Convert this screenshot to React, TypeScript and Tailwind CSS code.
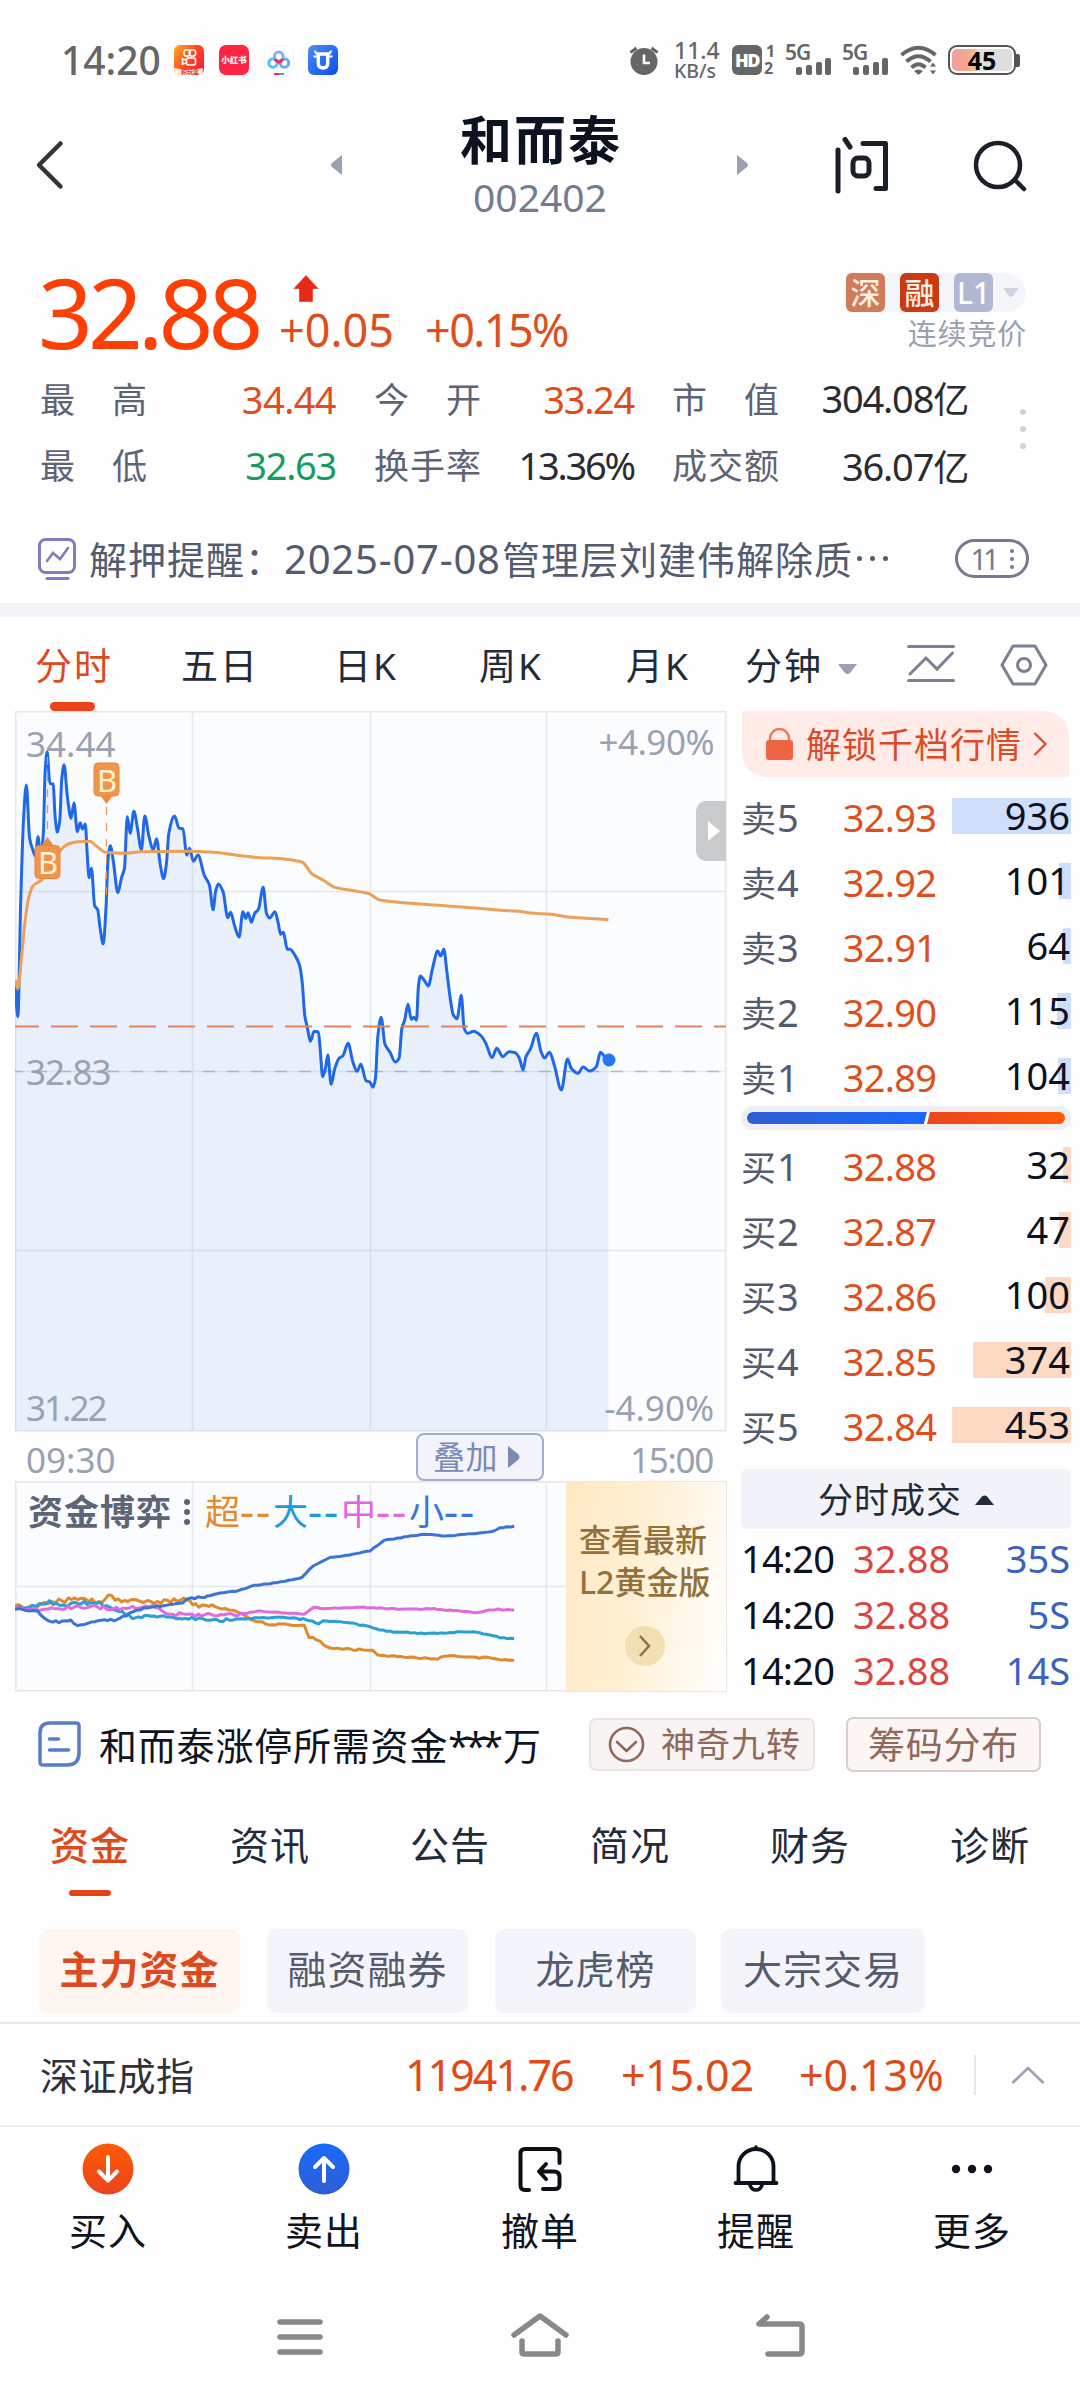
import type { ReactNode } from "react";

type Pt = [number, number];

/** Monotone cubic path through the points, so peaks keep their height. */
function smooth(p: Pt[]): string {
  const n = p.length;
  const m: number[] = [];
  const s: number[] = [];
  for (let i = 0; i < n - 1; i++) s.push((p[i + 1][1] - p[i][1]) / (p[i + 1][0] - p[i][0]));
  for (let i = 0; i < n; i++) {
    if (i === 0) m.push(s[0]);
    else if (i === n - 1) m.push(s[n - 2]);
    else if (s[i - 1] * s[i] <= 0) m.push(0);
    else m.push((2 * s[i - 1] * s[i]) / (s[i - 1] + s[i]));
  }
  let d = `M${p[0][0]},${p[0][1]}`;
  for (let i = 0; i < n - 1; i++) {
    const h = (p[i + 1][0] - p[i][0]) / 3;
    d += `C${p[i][0] + h},${p[i][1] + m[i] * h} ${p[i + 1][0] - h},${p[i + 1][1] - m[i + 1] * h} ${p[i + 1][0]},${p[i + 1][1]}`;
  }
  return d;
}

/** Adds a small deterministic ripple to a sparse series. */
function ripple(p: Pt[], amp: number, seed: number): string {
  let d = `M${p[0][0]},${p[0][1]}`;
  let k = seed;
  for (let i = 0; i < p.length - 1; i++) {
    const [x0, y0] = p[i];
    const [x1, y1] = p[i + 1];
    const steps = Math.max(1, Math.round((x1 - x0) / 7));
    for (let j = 1; j <= steps; j++) {
      k = (k * 16807) % 2147483647;
      const t = j / steps;
      const a = x0 < 420 ? amp : amp * 0.35;
      d += `L${x0 + (x1 - x0) * t},${y0 + (y1 - y0) * t + (k / 2147483647 - 0.5) * a}`;
    }
  }
  return d;
}

const price: Pt[] = [
  [32, 1080], [38, 1190], [44, 850], [50, 600], [56, 495], [63, 655], [70, 690], [75, 708], [81, 650], [86, 720],
  [92, 640], [96, 450], [100, 395], [106, 490], [113, 492], [117, 590], [122, 637], [127, 600], [131, 480], [136, 434],
  [143, 530], [151, 595], [157, 549], [164, 635], [170, 608], [175, 627], [181, 612], [185, 700], [189, 773], [194, 745],
  [201, 858], [207, 868], [213, 930], [219, 972], [225, 860], [229, 720], [234, 677], [240, 720], [250, 818], [258, 772],
  [264, 745], [270, 590], [276, 640], [284, 574], [291, 620], [300, 690], [307, 588], [316, 650], [325, 690], [332, 656],
  [340, 735], [347, 776], [353, 730], [358, 640], [370, 588], [380, 625], [388, 626], [396, 705], [402, 685], [410, 724],
  [420, 705], [433, 765], [444, 795], [452, 869], [457, 815], [463, 792], [473, 815], [483, 893], [489, 877], [497, 915],
  [507, 951], [515, 875], [521, 895], [526, 878], [533, 907], [540, 880], [548, 868], [558, 802], [565, 880], [572, 894],
  [583, 875], [590, 910], [595, 943], [601, 937], [609, 988], [614, 987], [627, 1010], [635, 1035], [641, 1090], [646, 1185],
  [652, 1225], [658, 1264], [666, 1234], [675, 1236], [679, 1290], [684, 1370], [690, 1345], [695, 1305], [702, 1393], [710, 1345],
  [719, 1315], [727, 1307], [738, 1270], [748, 1325], [757, 1354], [765, 1333], [776, 1382], [784, 1386], [791, 1402], [796, 1375],
  [801, 1250], [808, 1192], [816, 1272], [827, 1297], [838, 1326], [846, 1315], [852, 1225], [858, 1200], [865, 1153], [872, 1198],
  [877, 1192], [883, 1200], [887, 1100], [891, 1068], [899, 1080], [908, 1098], [917, 1045], [928, 993], [934, 1008], [941, 988],
  [947, 1050], [954, 1130], [961, 1185], [969, 1196], [978, 1126], [984, 1225], [991, 1240], [1004, 1234], [1020, 1248], [1030, 1270],
  [1043, 1313], [1053, 1285], [1066, 1310], [1079, 1295], [1092, 1298], [1101, 1315], [1109, 1350], [1115, 1310], [1125, 1285], [1137, 1240],
  [1147, 1295], [1154, 1314], [1165, 1297], [1175, 1335], [1190, 1410], [1203, 1317], [1211, 1345], [1225, 1360], [1236, 1341], [1250, 1353],
  [1264, 1340], [1273, 1297], [1282, 1310], [1290, 1320],
];

const average: Pt[] = [
  [32, 1080], [38, 1106], [46, 1010], [52, 920], [60, 840], [70, 798], [90, 778], [110, 725], [130, 688], [145, 672],
  [165, 665], [190, 664], [205, 679], [225, 697], [265, 700], [300, 695], [400, 694], [445, 696], [480, 701], [520, 709],
  [550, 713], [598, 716], [640, 726], [662, 762], [685, 780], [710, 802], [745, 811], [782, 821], [805, 840], [900, 853],
  [1010, 864], [1060, 871], [1100, 874], [1125, 879], [1170, 883], [1200, 890], [1290, 899],
];

const small: Pt[] = [
  [32, 630], [60, 634], [80, 638], [100, 662], [125, 668], [150, 664], [165, 678], [195, 668], [255, 659], [275, 640],
  [305, 626], [340, 618], [375, 615], [400, 598], [440, 590], [460, 582], [500, 575], [540, 558], [580, 551], [640, 534],
  [665, 498], [700, 474], [740, 467], [785, 453], [815, 422], [850, 414], [900, 404], [945, 409], [1040, 397], [1060, 385], [1090, 380],
];
const large: Pt[] = [
  [32, 628], [70, 618], [105, 608], [135, 620], [165, 610], [205, 610], [240, 626], [265, 640], [280, 652], [340, 650],
  [400, 658], [480, 662], [540, 656], [600, 654], [650, 660], [675, 672], [685, 663], [735, 668], [790, 685], [820, 696],
  [900, 702], [1010, 697], [1060, 714], [1090, 718],
];
const medium: Pt[] = [
  [32, 628], [60, 632], [90, 632], [130, 625], [200, 621], [240, 628], [330, 622], [360, 642], [400, 648], [510, 645],
  [550, 635], [645, 643], [665, 622], [680, 628], [750, 623], [870, 630], [920, 628], [1010, 640], [1050, 630], [1090, 630],
];
const huge: Pt[] = [
  [32, 620], [60, 628], [95, 608], [125, 604], [165, 600], [210, 608], [230, 592], [265, 603], [290, 598], [320, 610],
  [390, 602], [415, 618], [470, 625], [500, 635], [535, 662], [570, 674], [645, 678], [655, 712], [672, 720], [700, 748],
  [790, 752], [800, 768], [850, 772], [920, 780], [950, 770], [1030, 775], [1090, 784],
];

const asks = [
  { l: "5", p: "32.93", v: "936", w: 119 },
  { l: "4", p: "32.92", v: "101", w: 12 },
  { l: "3", p: "32.91", v: "64", w: 8 },
  { l: "2", p: "32.90", v: "115", w: 14 },
  { l: "1", p: "32.89", v: "104", w: 13 },
];
const bids = [
  { l: "1", p: "32.88", v: "32", w: 8 },
  { l: "2", p: "32.87", v: "47", w: 12 },
  { l: "3", p: "32.86", v: "100", w: 26 },
  { l: "4", p: "32.85", v: "374", w: 98 },
  { l: "5", p: "32.84", v: "453", w: 119 },
];

function Signal() {
  return (
    <div className="relative h-[30px] w-[47px]">
      <span className="absolute -top-[3px] left-0 text-[21px] leading-[20px] font-semibold tracking-[-1px]">5G</span>
      <svg className="absolute right-0 bottom-0" width="37" height="17" fill="#666">
        <rect x="1" y="9" width="6" height="8" rx="2" />
        <rect x="11" y="7" width="6" height="10" rx="2" />
        <rect x="21" y="4" width="6" height="13" rx="2" />
        <rect x="30" y="0" width="6" height="17" rx="2" />
      </svg>
    </div>
  );
}

function StatusBar() {
  return (
    <div className="flex h-[90px] items-center pt-[30px] text-[#666]">
      <span className="ml-[61px] w-[113px] text-[39px] leading-[60px] font-medium">14:20</span>
      <svg width="30" height="30" viewBox="0 0 30 30">
        <defs>
          <linearGradient id="ks" x1="0" y1="0" x2="1" y2="0.7">
            <stop offset="0" stopColor="#ffae2b" />
            <stop offset="0.55" stopColor="#ff4a1c" />
            <stop offset="1" stopColor="#f5203f" />
          </linearGradient>
        </defs>
        <rect width="30" height="30" rx="6" fill="url(#ks)" />
        <g fill="none" stroke="#fff" strokeWidth="1.6">
          <circle cx="13" cy="8" r="3.2" />
          <circle cx="18.5" cy="8" r="3.2" />
          <rect x="12.5" y="13" width="9" height="7" rx="2" />
          <path d="M12 15l-3.5-1.2v5.4L12 18" />
        </g>
        <path d="M0 23q15 3 28 0l1 1-1 6H6q-6 0-6-6z" fill="#ffe9d6" />
        <text x="7" y="29.4" fontSize="6" fontWeight="700" fill="#d5391c">积玩盒</text>
      </svg>
      <div className="ml-[15px] flex h-[30px] w-[30px] items-center justify-center rounded-[7px] bg-[#ff2442] text-[8.5px] font-black whitespace-nowrap text-white">
        小红书
      </div>
      <svg className="ml-[15px]" width="30" height="30" viewBox="0 0 30 30">
        <rect x="0.5" y="0.5" width="29" height="29" rx="6" fill="#fff" stroke="#f4f4f6" />
        <g fill="none" strokeWidth="3">
          <circle cx="9" cy="18" r="4.2" stroke="#4cc6f0" />
          <circle cx="20.5" cy="18" r="4.2" stroke="#6aa9ec" />
          <circle cx="14.8" cy="11.5" r="4.4" stroke="#7fb5ee" />
          <path d="M10.6 14q4.2 6 8.4 0" stroke="#e0306e" />
        </g>
        <path d="M10 29h5" stroke="#e0306e" strokeWidth="2" />
        <path d="M15 29h5" stroke="#3f9be0" strokeWidth="2" />
      </svg>
      <svg className="ml-[14px]" width="30" height="30" viewBox="0 0 30 30">
        <defs>
          <linearGradient id="bull" x1="0" y1="0" x2="1" y2="1">
            <stop offset="0" stopColor="#4b8cf5" />
            <stop offset="1" stopColor="#0a50ea" />
          </linearGradient>
        </defs>
        <rect width="30" height="30" rx="6" fill="url(#bull)" />
        <path d="M7.200 5.500q0 3.500 3.500 3.500h8.600q3.500 0 3.500-3.500" fill="none" stroke="#fff" strokeWidth="2" />
        <path d="M5.500 11.500h4M20.500 11.500h4" stroke="#fff" strokeWidth="2" />
        <path d="M10.300 9v9q0 5 4.700 5t4.700-5V9z" fill="none" stroke="#fff" strokeWidth="3.400" />
      </svg>
      <svg className="ml-[291px]" width="30" height="30" viewBox="0 0 30 30">
        <circle cx="15" cy="16.500" r="13.500" fill="#666" />
        <path d="M1.500 7.500l6-4.500M28.500 7.500l-6-4.500" stroke="#666" strokeWidth="3" />
        <path d="M15 9.500v8.500h6" fill="none" stroke="#fff" strokeWidth="2.600" />
      </svg>
      <div className="ml-[15px] w-[58px] font-medium">
        <div className="text-[23px] leading-[21px]">11.4</div>
        <div className="text-[19.500px] leading-[19px]">KB/s</div>
      </div>
      <div className="flex h-[30px] w-[30px] items-center justify-center rounded-[6px] bg-[#666] text-[18px] leading-none font-black tracking-[-1.500px] text-white">
        HD
      </div>
      <div className="ml-[2px] w-[21px] text-[16px] leading-[17px] font-bold">
        <div className="ml-[2px]">1</div>
        <div>2</div>
      </div>
      <Signal />
      <div className="w-[10px]" />
      <Signal />
      <svg className="ml-[11px]" width="38" height="30" viewBox="0 0 38 30">
        <g fill="none" stroke="#666" strokeWidth="4">
          <path d="M1.500 10q17-14.500 34 0" />
          <path d="M6.500 16.500q12-10.500 24 0" />
          <path d="M11.500 22.500q7-6.500 14 0" />
        </g>
        <path d="M14 26q4.500-3 9 0l-4.500 4z" fill="#666" />
        <path d="M29 22l4-5 4 5zM29 25h8l-4 5z" fill="#666" stroke="#fefefe" strokeWidth="1" />
      </svg>
      <div className="ml-[10px] flex h-[30px] w-[68px] rounded-[9px] border-2 border-[#555] p-[2px]">
        <div className="flex flex-1 items-center justify-center rounded-[5px] bg-[linear-gradient(90deg,#f59c9f_0%,#f3a78f_25%,#f0c98e_42%,#dedede_43%)] text-[25px] leading-none font-bold text-black">
          45
        </div>
      </div>
      <div className="h-[13px] w-[4px] rounded-r-[2px] bg-[#555]" />
    </div>
  );
}

function Header() {
  return (
    <div className="flex h-[150px] items-center">
      <svg className="ml-[34px]" width="32" height="52" viewBox="0 0 32 52" fill="none" stroke="#333" strokeWidth="4.500" strokeLinecap="round" strokeLinejoin="round">
        <path d="M26.500 4.500L5 26l21.500 21.500" />
      </svg>
      <svg className="ml-[265px]" width="11" height="20">
        <path d="M11 0v20L1 12q-2-2 0-4z" fill="#9ba1b3" />
      </svg>
      <div className="ml-[88px] w-[220px] text-center">
        <h1 className="mt-[8px] pl-[2px] text-[52px] leading-[56px] font-bold tracking-[2px] text-[#0c121f]">和而泰</h1>
        <div className="text-[39px] leading-[58px] text-[#747b8e]">002402</div>
      </div>
      <svg className="ml-[87px]" width="11" height="20">
        <path d="M0 0v20l10-8q2-2 0-4z" fill="#9ba1b3" />
      </svg>
      <svg className="ml-[85px]" width="60" height="60" viewBox="0 0 60 60" fill="none" stroke="#1b1f27" strokeWidth="5" strokeLinecap="round" strokeLinejoin="round">
        <path d="M5 15v41M12 4.500l5 7.500M30 8.500h22.500V53.500H43" />
        <rect x="20" y="23" width="16" height="18" rx="5" />
      </svg>
      <svg className="ml-[77px]" width="60" height="60" viewBox="0 0 60 60" fill="none" stroke="#1b1f27" strokeWidth="4.500" strokeLinecap="round">
        <circle cx="28" cy="30" r="22" />
        <path d="M45 45l9 9" />
      </svg>
    </div>
  );
}

function Badge({ cls, children }: { cls: string; children: ReactNode }) {
  return (
    <span className={"flex h-[39px] w-[39px] items-center justify-center rounded-[6px] text-[30px] leading-none font-medium text-[#fff1e6] " + cls}>
      {children}
    </span>
  );
}

function Quote() {
  return (
    <div className="relative h-[260px]">
      <div className="flex h-[126px]">
        <div className="ml-[38px] mt-[17px] w-[243px] text-[96px] leading-[110px] tracking-[-5px] text-[#fd3f04]">32.88</div>
        <div className="w-[300px] pt-[34px]">
          <svg className="ml-[11px]" width="28" height="30" viewBox="0 0 28 30">
            <path d="M14 1l13 14h-6v13H7V15H1z" fill="#e62a17" stroke="#fbe3df" strokeWidth="0.500" />
          </svg>
          <div className="mt-[3px] ml-[-2px] flex text-[45px] leading-[46px] text-[#de4f20]">
            <span className="w-[146px]">+0.05</span>
            <span className="tracking-[-1.600px]">+0.15%</span>
          </div>
        </div>
        <div className="ml-auto mr-[54px] mt-[33px] flex flex-col items-end">
          <div className="flex h-[39px] w-[180px] items-center gap-[15px] rounded-r-full bg-[#f5f6fa]">
            <Badge cls="bg-[#d27b5a]">深</Badge>
            <Badge cls="bg-[#cb3a13]">融</Badge>
            <Badge cls="bg-[#b0b8d3] text-white">L1</Badge>
            <svg className="-ml-[5px]" width="16" height="10">
              <path d="M0 0h16l-6 8q-2 2-4 0z" fill="#cdd2dc" />
            </svg>
          </div>
          <span className="-mr-[1px] mt-[5px] text-[29px] leading-[34px] tracking-[0.800px] text-[#9aa0b0]">连续竞价</span>
        </div>
      </div>
      <div className="flex text-[38px] leading-[66px] whitespace-nowrap text-[#2b2c30]">
        <div className="ml-[40px] w-[108px] pt-[1px] text-[35px] tracking-[1px] text-[#5d6476]">
          <div>最<span className="inline-block w-[36px]" />高</div>
          <div>最<span className="inline-block w-[36px]" />低</div>
        </div>
        <div className="w-[188px] text-right">
          <div className="tracking-[-0.600px] text-[#de4f20]">34.44</div>
          <div className="tracking-[-1.300px] text-[#159d61]">32.63</div>
        </div>
        <div className="ml-[38px] w-[108px] pt-[1px] text-[35px] tracking-[1px] text-[#5d6476]">
          <div>今<span className="inline-block w-[36px]" />开</div>
          <div>换手率</div>
        </div>
        <div className="w-[152px] text-right">
          <div className="tracking-[-1.300px] text-[#e04c17]">33.24</div>
          <div className="tracking-[-2.200px]">13.36%</div>
        </div>
        <div className="ml-[38px] w-[108px] pt-[1px] text-[35px] tracking-[1px] text-[#5d6476]">
          <div>市<span className="inline-block w-[36px]" />值</div>
          <div>成交额</div>
        </div>
        <div className="mt-[-1px] w-[188px] text-right tracking-[-1.200px]">
          <div>304.08<span className="text-[36px]">亿</span></div>
          <div>36.07<span className="text-[36px]">亿</span></div>
        </div>
        <div className="ml-[52px] mt-[43px] flex flex-col gap-[11px]">
          <i className="block h-[6px] w-[6px] rounded-full bg-[#cdd2dc]" />
          <i className="block h-[6px] w-[6px] rounded-full bg-[#cdd2dc]" />
          <i className="block h-[6px] w-[6px] rounded-full bg-[#cdd2dc]" />
        </div>
      </div>
    </div>
  );
}

function Notice() {
  return (
    <div className="flex h-[103px] items-center pt-[14px]">
      <svg className="ml-[37px]" width="40" height="44" viewBox="0 0 40 44" fill="none" stroke="#8678c4" strokeWidth="3" strokeLinecap="round">
        <rect x="2.500" y="2.500" width="35" height="33" rx="6" />
        <path d="M10 24l6-8 7 6 8-11" strokeWidth="2.600" />
        <path d="M10 41.500h21" />
      </svg>
      <div className="ml-[12px] flex w-[866px] items-center text-[38px] leading-[60px] tracking-[1px] whitespace-nowrap text-[#545b6e]">
        <span className="w-[195px]">解押提醒：</span>
        <span className="w-[218px] text-[40px] tracking-[0.800px]">2025-07-08</span>
        <span>管理层刘建伟解除质</span>
        <span className="flex gap-[8px] pl-[4px]">
          <i className="block h-[5px] w-[5px] rounded-full bg-[#545b6e]" />
          <i className="block h-[5px] w-[5px] rounded-full bg-[#545b6e]" />
          <i className="block h-[5px] w-[5px] rounded-full bg-[#545b6e]" />
        </span>
      </div>
      <div className="flex h-[39px] w-[74px] items-center justify-center gap-[14px] rounded-full border-[3px] border-[#747b8e] text-[29px] leading-none tracking-[-4px] text-[#747b8e]">
        11
        <span className="flex flex-col gap-[4px]">
          <i className="block h-[4px] w-[4px] rounded-full bg-[#747b8e]" />
          <i className="block h-[4px] w-[4px] rounded-full bg-[#747b8e]" />
          <i className="block h-[4px] w-[4px] rounded-full bg-[#747b8e]" />
        </span>
      </div>
    </div>
  );
}

function PeriodTabs() {
  return (
    <div className="flex h-[94px] items-center pt-[4px] text-[37px] leading-[60px] tracking-[2px] whitespace-nowrap text-[#232b3b]">
      <div className="relative ml-[35px] w-[146px] text-[#dd4a20]">
        分时
        <span className="absolute top-[66px] left-[15px] h-[9px] w-[45px] rounded-full bg-[#ec441a]" />
      </div>
      <div className="w-[153px]">五日</div>
      <div className="w-[145px]">日K</div>
      <div className="w-[147px]">周K</div>
      <div className="w-[119px]">月K</div>
      <div className="w-[93px]">分钟</div>
      <svg className="mt-[6px]" width="19" height="11">
        <path d="M0 0h19l-7 9q-2.500 2-5 0z" fill="#9ba1b3" />
      </svg>
      <svg className="ml-[49px] -mt-[4px]" width="50" height="40" viewBox="0 0 50 40" fill="none" stroke="#7b8193" strokeWidth="3" strokeLinecap="round">
        <path d="M2.500 2.500h45M2.500 36.500h45M4 30l16-16 11 11L46.500 9" />
      </svg>
      <svg className="ml-[44px] -mt-[3px]" width="48" height="44" viewBox="0 0 48 44" fill="none" stroke="#7b8193" strokeWidth="3" strokeLinejoin="round">
        <path d="M13 3h22l11 19-11 19H13L2 22z" />
        <circle cx="24" cy="22" r="6.500" />
      </svg>
    </div>
  );
}

function PriceChart() {
  const line = smooth(price);
  return (
    <div className="relative h-[721px] w-[712px] text-[35px] leading-[40px] text-[#9aa1b2]">
      <svg className="block" width="712" height="721" viewBox="0 0 712 721">
        <rect x="0.750" y="0.750" width="710" height="719" fill="#fbfcfe" stroke="#e4e6ea" strokeWidth="1.500" />
        <path d="M177.500 0v720M355.500 0v720M531.500 0v720M0 180.500h711M0 360.500h711M0 539.500h711" stroke="#e6e8ec" strokeWidth="1.500" />
        <path d="M0 360.500h711" stroke="#b3bac8" strokeWidth="1.500" strokeDasharray="12 12" strokeDashoffset="4" />
        <svg x="0" y="0" width="711" height="720" viewBox="32 273 1507 2160" preserveAspectRatio="none" fill="none" overflow="visible">
          <path d={line + "L1290,2433L32,2433Z"} fill="#2f78e8" fillOpacity="0.085" />
          <path d={line} stroke="#1f68e6" strokeWidth="3" strokeLinejoin="round" vectorEffect="non-scaling-stroke" />
          <path d={smooth(average)} stroke="#eda057" strokeWidth="3" strokeLinejoin="round" vectorEffect="non-scaling-stroke" />
        </svg>
        <path d="M0 315.500h711" stroke="#e0835f" strokeWidth="2" strokeDasharray="27 12" strokeDashoffset="3" />
        <path d="M32.500 46v78M91.500 96v90" stroke="#e0935f" strokeWidth="1.200" strokeDasharray="8 8" />
        <circle cx="594" cy="349" r="6.500" fill="#2a77f6" />
        <path d="M26 135l6.500-9 6.500 9z" fill="#ec8b45" />
        <rect x="20" y="134.500" width="25" height="33" rx="4" fill="#f0964b" stroke="#ea8438" />
        <path d="M85 84h13l-6.500 9z" fill="#ec8b45" />
        <rect x="79" y="52" width="25" height="33" rx="4" fill="#f0964b" stroke="#ea8438" />
      </svg>
      <span className="absolute top-[134px] left-[20px] w-[26px] text-center text-[31px] leading-[34px] text-[#fff2d8]">B</span>
      <span className="absolute top-[52px] left-[79px] w-[26px] text-center text-[31px] leading-[34px] text-[#fff2d8]">B</span>
      <span className="absolute top-[13px] left-[11px]">34.44</span>
      <span className="absolute top-[11px] right-[13px] tracking-[-0.500px]">+4.90%</span>
      <span className="absolute top-[341px] left-[11px] tracking-[-1px]">32.83</span>
      <span className="absolute top-[677px] left-[11px] tracking-[-2px]">31.22</span>
      <span className="absolute top-[677px] right-[13px]">-4.90%</span>
      <div className="absolute top-[90px] right-[1px] flex h-[60px] w-[30px] items-center rounded-l-[10px] bg-[#c9cbcd] pl-[12px]">
        <svg width="12" height="20">
          <path d="M0 0l12 10L0 20z" fill="#fff" />
        </svg>
      </div>
    </div>
  );
}

function Legend({ cls, children }: { cls: string; children: ReactNode }) {
  return (
    <span className={"flex w-[68px] items-center " + cls}>
      {children}
      <b className="inline-block origin-left scale-x-[1.250] font-medium tracking-[1.500px]">--</b>
    </span>
  );
}

function FlowChart() {
  const paths: [string, string][] = [
    [ripple(huge, 14, 17), "#e08a2b"],
    [ripple(large, 10, 91), "#2a9fd3"],
    [ripple(medium, 10, 55), "#e06ae0"],
    [ripple(small, 7, 23), "#3b74d6"],
  ];
  return (
    <div className="relative flex h-[211px] w-[712px]">
      <svg className="block" width="712" height="211" viewBox="0 0 712 211">
        <rect x="0.750" y="0.750" width="710" height="209" fill="#fbfcfe" stroke="#e4e6ea" strokeWidth="1.500" />
        <path d="M177.500 0v210M355.500 0v210M531.500 0v210M0 105.500h711" stroke="#e6e8ec" strokeWidth="1.500" />
        <svg x="0" y="0" width="711" height="210" viewBox="32 244 1507 631" preserveAspectRatio="none" fill="none">
          {paths.map(([d, c]) => (
            <path key={c} d={d} stroke={c} strokeWidth="3" strokeLinejoin="round" vectorEffect="non-scaling-stroke" />
          ))}
        </svg>
      </svg>
      <div className="absolute top-[9px] left-[13px] flex items-center text-[35px] leading-[44px]">
        <span className="w-[156px] font-bold tracking-[1px] text-[#5d6476]">资金博弈</span>
        <span className="mr-[15px] flex flex-col gap-[4px]">
          <i className="block h-[6px] w-[6px] rounded-full bg-[#5d6476]" />
          <i className="block h-[6px] w-[6px] rounded-full bg-[#5d6476]" />
          <i className="block h-[6px] w-[6px] rounded-full bg-[#5d6476]" />
        </span>
        <Legend cls="text-[#e6892a]">超</Legend>
        <Legend cls="text-[#1d9bd8]">大</Legend>
        <Legend cls="text-[#e462e4]">中</Legend>
        <Legend cls="text-[#3b74d6]">小</Legend>
      </div>
      <div className="absolute top-0 right-0 h-[211px] w-[161px] border-y border-r border-[#e9e6dc] bg-[linear-gradient(100deg,#ffe9c4_0%,#fff0d4_45%,#fffaf0_80%,#fff_100%)] pt-[37px] pl-[13px] text-[32px] leading-[42px] font-medium whitespace-nowrap text-[#94703a]">
        <div>查看最新</div>
        <div>L2黄金版</div>
        <div className="mt-[23px] ml-[46px] flex h-[40px] w-[40px] items-center justify-center rounded-full bg-[#f3dfb4]">
          <svg width="14" height="24" viewBox="0 0 14 24" fill="none" stroke="#94703a" strokeWidth="2.500">
            <path d="M2 2l9 10-9 10" />
          </svg>
        </div>
      </div>
    </div>
  );
}

function BookRow({ side, l, p, v, w, fill }: { side: string; l: string; p: string; v: string; w: number; fill: string }) {
  return (
    <div className="flex h-[65px] items-start">
      <div className="flex w-[88px] items-baseline pt-px text-[38px] leading-[36px] text-[#545b6e]">
        <span className="mr-[1px] text-[35px]">{side}</span>
        {l}
      </div>
      <div className="w-[121px] pt-px text-center text-[38px] leading-[36px] tracking-[-0.700px] text-[#de4f20]">{p}</div>
      <div className="relative flex h-[36px] flex-1 justify-end">
        <div className={"h-[36px] " + fill} style={{ width: w }} />
        <span className="absolute top-[-1px] right-[1px] text-[38px] leading-[36px] text-[#0c121f]">{v}</span>
      </div>
    </div>
  );
}

function OrderBook() {
  return (
    <div className="ml-[14px] w-[330px]">
      <div className="ml-[1px] flex h-[66px] w-[327px] items-center rounded-tr-[25px] rounded-bl-[25px] bg-[#ffebe8] text-[35px] leading-[60px] tracking-[1px] text-[#dd4a26]">
        <svg className="ml-[24px] mr-[13px]" width="27" height="32" viewBox="0 0 27 32">
          <path d="M4 13V10.500a9.500 9.500 0 0 1 19 0V13" fill="none" stroke="#ee7a5e" strokeWidth="2.500" />
          <rect x="0" y="12" width="27" height="20" rx="3" fill="#f16443" />
        </svg>
        <span className="pt-[2px]">解锁千档行情</span>
        <svg className="ml-[11px]" width="14" height="24" viewBox="0 0 14 24" fill="none" stroke="#dd4a26" strokeWidth="2.200">
          <path d="M1.500 1l11 11-11 11" />
        </svg>
      </div>
      <div className="mt-[21px] h-[306px]">
        {asks.map((r) => (
          <BookRow key={r.l} side="卖" {...r} fill="bg-[#cfdefb]" />
        ))}
      </div>
      <div className="mt-[2px] flex h-[24px] items-center rounded-full bg-[#efeff1] px-[6px]">
        <svg width="318" height="12" viewBox="0 0 318 12">
          <defs>
            <linearGradient id="sell">
              <stop offset="0" stopColor="#305ed4" />
              <stop offset="1" stopColor="#1a69fb" />
            </linearGradient>
            <linearGradient id="buy">
              <stop offset="0" stopColor="#ec461f" />
              <stop offset="1" stopColor="#fd5b03" />
            </linearGradient>
          </defs>
          <path d="M6 0H180l-3 12H6A6 6 0 0 1 6 0z" fill="url(#sell)" />
          <path d="M180 0h3l-3 12h-3z" fill="#fff" />
          <path d="M183 0h129a6 6 0 0 1 0 12H180z" fill="url(#buy)" />
        </svg>
      </div>
      <div className="mt-[17px] h-[322px]">
        {bids.map((r) => (
          <BookRow key={r.l} side="买" {...r} fill="bg-[#fdd8c3]" />
        ))}
      </div>
      <div className="flex h-[60px] items-center rounded-[6px] bg-[#f2f3f8] pt-px pl-[77px] text-[35px] leading-[60px] tracking-[1px] text-[#232b3b]">
        分时成交
        <svg className="ml-[13px]" width="19" height="10">
          <path d="M0 10h19L12 1.500q-2.500-2-5 0z" fill="#232b3b" />
        </svg>
      </div>
      <div className="pt-px">
        {["35S", "5S", "14S"].map((v) => (
          <div key={v} className="flex h-[56px] items-center text-[38px] leading-[56px]">
            <span className="w-[112px] tracking-[-0.800px] text-[#0c121f]">14:20</span>
            <span className="text-[#dc4440]">32.88</span>
            <span className="ml-auto mr-[1px] text-[#3b63bb]">{v}</span>
          </div>
        ))}
      </div>
    </div>
  );
}

function Shortcuts() {
  return (
    <div className="flex h-[104px] items-center whitespace-nowrap">
      <svg className="ml-[38px]" width="43" height="46" viewBox="0 0 43 46" fill="none" stroke="#5a7cc8" strokeWidth="3.500" strokeLinecap="round" strokeLinejoin="round">
        <path d="M12 2h26q3 0 3 3v27q0 12-12 12H5q-3 0-3-3V12Q2 2 12 2z" />
        <path d="M11.500 18h9M11.500 29h19" />
      </svg>
      <span className="ml-[18px] w-[490px] pt-[1px] text-[38px] leading-[60px] tracking-[0.800px] text-[#0f141f]">
        和而泰涨停所需资金<span className="tracking-[-4px]">***</span><span className="ml-[4px]">万</span>
      </span>
      <div className="flex h-[53px] w-[226px] items-center rounded-[7px] border-2 border-[#e9e5e3] bg-[#f7f4f3] pl-[17px] text-[34px] leading-none tracking-[1px] text-[#91695c]">
        <svg className="mr-[16px]" width="37" height="37" viewBox="0 0 37 37" fill="none" stroke="#91695c" strokeWidth="2.600" strokeLinecap="round" strokeLinejoin="round">
          <circle cx="18.500" cy="18.500" r="16.500" />
          <path d="M9 16l9.500 9L28 16" />
        </svg>
        神奇九转
      </div>
      <div className="ml-[31px] flex h-[55px] w-[195px] items-center justify-center rounded-[7px] border-2 border-[#dccdc9] bg-[#fbf6f4] text-[37px] leading-none tracking-[0.700px] text-[#91695c]">
        筹码分布
      </div>
    </div>
  );
}

function SectionTabs() {
  return (
    <div className="grid h-[133px] grid-cols-6 text-[39px] leading-[60px] tracking-[1px] text-[#232b3b]">
      {["资金", "资讯", "公告", "简况", "财务", "诊断"].map((t, i) => (
        <div key={t} className={"flex flex-col items-center pt-[19px] " + (i === 0 ? "font-medium text-[#dd4a20]" : "")}>
          {t}
          {i === 0 && <span className="mt-[15px] h-[6px] w-[42px] rounded-full bg-[#e2431b]" />}
        </div>
      ))}
    </div>
  );
}

function Chips() {
  return (
    <div className="flex h-[95px] gap-[28px] border-b-2 border-[#e8e9ec] pl-[39px] text-[39px] leading-[80px] tracking-[1px] text-[#545b6e]">
      <div className="h-[84px] w-[201px] rounded-[10px] bg-[#fff6f1] text-center font-bold text-[#dd4a20]">主力资金</div>
      <div className="-ml-[1px] h-[84px] w-[201px] rounded-[10px] bg-[#f4f5fa] text-center">融资融券</div>
      <div className="-ml-[1px] h-[84px] w-[201px] rounded-[10px] bg-[#f4f5fa] text-center">龙虎榜</div>
      <div className="-ml-[3px] h-[84px] w-[204px] rounded-[10px] bg-[#f4f5fa] text-center">大宗交易</div>
    </div>
  );
}

function IndexBar() {
  return (
    <div className="flex h-[103px] items-center border-b-2 border-[#eaebed] text-[43px] leading-[60px] text-[#e14a17]">
      <span className="ml-[40px] w-[365px] text-[38px] tracking-[0.700px] text-[#2f3136]">深证成指</span>
      <span className="w-[216px] pt-px tracking-[-2px]">11941.76</span>
      <span className="w-[178px] pt-px tracking-[-0.300px]">+15.02</span>
      <span className="w-[175px] pt-px tracking-[-0.200px]">+0.13%</span>
      <span className="h-[40px] w-[2px] bg-[#e4e6ea]" />
      <svg className="ml-[35px]" width="34" height="20" viewBox="0 0 34 20" fill="none" stroke="#9ba1b3" strokeWidth="2.600">
        <path d="M1.500 18L17 3l15.500 15" />
      </svg>
    </div>
  );
}

function Action({ label, children }: { label: string; children: ReactNode }) {
  return (
    <div className="flex flex-col items-center">
      <svg className="mr-[1px]" width="52" height="52" viewBox="0 0 52 52" fill="none" strokeLinecap="round" strokeLinejoin="round">
        {children}
      </svg>
      <span className="mt-[5px] text-[38px] leading-[60px] tracking-[1px] text-[#0f141f]">{label}</span>
    </div>
  );
}

function Actions() {
  return (
    <div className="grid h-[164px] grid-cols-5 pt-[16px]">
      <Action label="买入">
        <defs>
          <linearGradient id="inFill" x1="0" y1="0" x2="0" y2="1">
            <stop offset="0" stopColor="#fd5b03" />
            <stop offset="1" stopColor="#ea4420" />
          </linearGradient>
        </defs>
        <circle cx="26" cy="26" r="25.500" fill="url(#inFill)" />
        <path d="M26 14v23M17 28.500l9 9 9-9" stroke="#fff" strokeWidth="4" />
      </Action>
      <Action label="卖出">
        <defs>
          <linearGradient id="outFill" x1="0" y1="0" x2="0" y2="1">
            <stop offset="0" stopColor="#1a69fb" />
            <stop offset="1" stopColor="#305ed4" />
          </linearGradient>
        </defs>
        <circle cx="26" cy="26" r="25.500" fill="url(#outFill)" />
        <path d="M26 38V15M17 24l9-9 9 9" stroke="#fff" strokeWidth="4" />
      </Action>
      <Action label="撤单">
        <path d="M15 47h-4q-4.500 0-4.500-4.500v-32Q6.500 6 11 6h30q4.500 0 4.500 4.500V20" stroke="#0c0f14" strokeWidth="4" />
        <path d="M32 21l-7 7.500 7 7.500M26 28.500h14q5.500 0 5.500 5.500v8q0 4-5 4H29" stroke="#0c0f14" strokeWidth="4" />
      </Action>
      <Action label="提醒">
        <path d="M5.500 40h41M8.500 38V23.500a17.500 17.500 0 0 1 35 0V38" stroke="#0c121f" strokeWidth="3.800" />
        <path d="M20 42q1.500 5 6 5t6-5M26 4v1" stroke="#0c121f" strokeWidth="3.600" />
      </Action>
      <Action label="更多">
        <circle cx="10" cy="26" r="4.200" fill="#0c121f" />
        <circle cx="26" cy="26" r="4.200" fill="#0c121f" />
        <circle cx="42" cy="26" r="4.200" fill="#0c121f" />
      </Action>
    </div>
  );
}

function SystemNav() {
  return (
    <div className="flex h-[110px] items-center pb-[18px]">
      <svg className="ml-[275px]" width="50" height="46" viewBox="0 0 50 46" stroke="#888" strokeWidth="5.500" strokeLinecap="round">
        <path d="M5 8h40M5 23h40M5 38h40" />
      </svg>
      <svg className="ml-[185px]" width="60" height="48" viewBox="0 0 60 48" fill="none" stroke="#888" strokeWidth="5.500" strokeLinecap="round" strokeLinejoin="round">
        <path d="M4 22L30 3l26 19M12 28v11q0 2 2 2h32q2 0 2-2V28" />
      </svg>
      <svg className="ml-[183px]" width="54" height="48" viewBox="0 0 54 48" fill="none" stroke="#888" strokeWidth="5.500" strokeLinecap="round" strokeLinejoin="round">
        <path d="M14 4L6 11h40q3 0 3 3v24q0 3-3 3H15" />
      </svg>
    </div>
  );
}

export default function App() {
  return (
    <div lang="zh-CN" className="h-[2400px] w-[1080px] overflow-hidden bg-[#fefefe] [font-family:'Noto_Sans','Noto_Sans_CJK_SC',sans-serif]">
      <StatusBar />
      <Header />
      <Quote />
      <Notice />
      <div className="h-[14px] bg-[#f3f4f8]" />
      <PeriodTabs />
      <div className="flex h-[981px]">
        <div className="ml-[15px] w-[712px]">
          <PriceChart />
          <div className="flex h-[49px] items-center text-[35px] leading-[48px] text-[#9aa1b2]">
            <span className="ml-[11px] w-[390px] pt-[6px]">09:30</span>
            <div className="flex h-[48px] w-[128px] items-center gap-[10px] rounded-[8px] border-2 border-[#a3add0] bg-[#f3f4fa] pl-[15px] text-[32px] leading-none tracking-[0.500px] text-[#7c88b8]">
              叠加
              <svg width="12" height="22">
                <path d="M0 0l10 8q3 3 0 6L0 22z" fill="#7c88b8" />
              </svg>
            </div>
            <span className="ml-auto mr-[14px] pt-[6px] tracking-[-1.300px]">15:00</span>
          </div>
          <FlowChart />
        </div>
        <OrderBook />
      </div>
      <Shortcuts />
      <SectionTabs />
      <Chips />
      <IndexBar />
      <Actions />
      <SystemNav />
    </div>
  );
}
